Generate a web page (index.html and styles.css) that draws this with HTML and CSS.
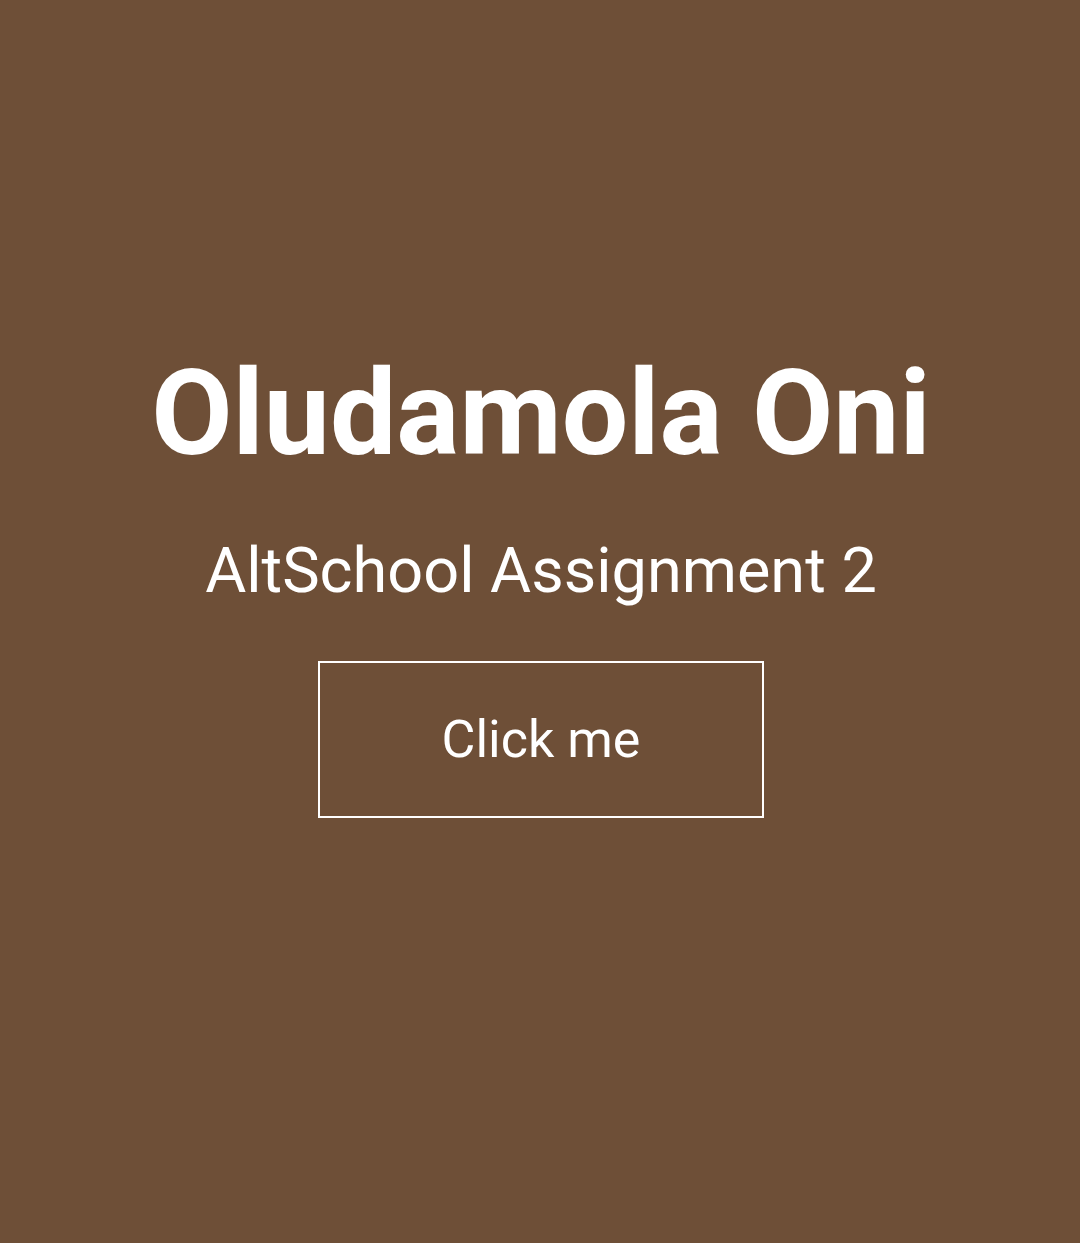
FILE: index.html
```html
<!DOCTYPE html>
<html lang="en">
<head>
<meta charset="utf-8">
<title>Oludamola Oni</title>
<link rel="stylesheet" href="styles.css">
</head>
<body>
<main class="hero">
  <h1 class="title">Oludamola Oni</h1>
  <p class="subtitle">AltSchool Assignment 2</p>
  <button class="btn">Click me</button>
</main>
</body>
</html>
```

FILE: styles.css
```css
html, body {
  margin: 0;
  padding: 0;
  height: 100%;
}
body {
  background: #6e4f37;
  color: #ffffff;
  font-family: Roboto, "Liberation Sans", sans-serif;
}
.hero {
  display: flex;
  flex-direction: column;
  align-items: center;
  padding-top: 344px;
  padding-left: 2px;
}
.title {
  margin: 0;
  font-size: 118px;
  font-weight: 700;
  line-height: 1.2;
}
.subtitle {
  margin: 47px 0 0;
  font-size: 63px;
  font-weight: 400;
  line-height: 1.2;
}
.btn {
  margin-top: 53px;
  width: 446px;
  height: 157px;
  padding: 0;
  background: transparent;
  border: 2px solid #ffffff;
  color: #ffffff;
  font-family: Roboto, "Liberation Sans", sans-serif;
  font-size: 52px;
  cursor: pointer;
}
```
